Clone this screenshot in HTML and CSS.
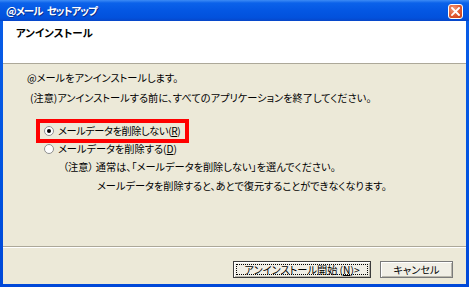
FILE: index.html
```html
<!DOCTYPE html>
<html lang="ja">
<head>
<meta charset="utf-8">
<title>@メール セットアップ</title>
<link rel="stylesheet" href="styles.css">
</head>
<body>
<div class="window">
  <div class="titlebar">
    <span class="title">@メール&nbsp;セットアップ</span>
    <span class="close">
      <svg width="9" height="9" viewBox="0 0 9 9"><path d="M1 1 L8 8 M8 1 L1 8" stroke="#fff" stroke-width="1.8" stroke-linecap="square"/></svg>
    </span>
  </div>
  <div class="body">
    <div class="header">
      <span class="header-title">アンインストール</span>
    </div>
    <div class="content">
      <p class="line l1">@メールをアンインストールします。</p>
      <p class="line l2">(注意)アンインストールする前に、すべてのアプリケーションを終了してください。</p>
      <div class="highlight">
        <span class="radio checked"></span>
        <span class="label">メールデータを削除しない(<u>R</u>)</span>
      </div>
      <div class="option">
        <span class="radio"></span>
        <span class="label">メールデータを削除する(<u>D</u>)</span>
      </div>
      <p class="line l5">（注意） 通常は、「メールデータを削除しない」を選んでください。</p>
      <p class="line l6">メールデータを削除すると、あとで復元することができなくなります。</p>
    </div>
    <div class="footer">
      <button class="btn default"><span class="focus">アンインストール開始 (<u>N</u>)&gt;</span></button>
      <button class="btn cancel">キャンセル</button>
    </div>
  </div>
</div>
</body>
</html>
```
FILE: styles.css
```css
* { box-sizing: border-box; }
html, body { margin: 0; padding: 0; }
body {
  width: 469px;
  height: 287px;
  overflow: hidden;
  font-family: "Noto Sans CJK JP", "Noto Sans", sans-serif;
  font-size: 10.2px;
  font-feature-settings: "palt";
  color: #000;
}
.window {
  width: 469px;
  height: 287px;
  display: flex;
  flex-direction: column;
  background: linear-gradient(to bottom, #0A5EE8, #0053E0 60%, #0048D8);
}
.titlebar {
  height: 21px;
  flex: none;
  display: flex;
  align-items: center;
  justify-content: space-between;
  padding: 0 6px 0 6px;
  background: linear-gradient(to bottom, #3D8BF5 0, #0B62EA 3px, #0457E3 50%, #0251DC 85%, #0746C8 100%);
}
.title {
  color: #fff;
  font-weight: bold;
  font-size: 10.5px;
  letter-spacing: -1px;
  word-spacing: 3px;
  line-height: 14px;
  text-shadow: 1px 1px 0 #0A2E8C;
  margin-top: 1px;
}
.close {
  width: 15px;
  height: 15px;
  margin-top: 2px;
  border: 1px solid #fff;
  border-radius: 3px;
  background: radial-gradient(circle at 35% 30%, #F29A7A, #E0582E 55%, #C43A16);
  display: flex;
  align-items: center;
  justify-content: center;
}
.body {
  flex: 1;
  margin: 0 3px 3px 3px;
  background: #ECE9D8;
  display: flex;
  flex-direction: column;
}
.header {
  height: 43px;
  flex: none;
  background: #fff;
  border-bottom: 1px solid #ACA899;
  padding: 4px 0 0 13px;
}
.header-title {
  font-weight: bold;
  font-size: 10.5px;
  line-height: 14px;
}
.content {
  flex: 1;
  display: flex;
  flex-direction: column;
  align-items: flex-start;
}
.line {
  margin: 0;
  line-height: 14px;
  white-space: nowrap;
}
.l1 { margin: 7px 0 0 24px; }
.l2 { margin: 6px 0 0 27px; }
.highlight {
  margin: 14px 0 0 33px;
  height: 24px;
  border: 4px solid #FF0000;
  display: flex;
  align-items: center;
  padding: 0 5px 0 4px;
}
.highlight .label { letter-spacing: -0.4px; }
.option {
  margin: 0 0 0 41px;
  height: 12px;
  display: flex;
  align-items: center;
}
.label {
  line-height: 14px;
  white-space: nowrap;
  margin-left: 4px;
}
.radio {
  width: 10px;
  height: 10px;
  border-radius: 50%;
  border: 1px solid #8E8F8F;
  background: #fff;
  flex: none;
  position: relative;
}
.radio.checked::after {
  content: "";
  position: absolute;
  left: 2px;
  top: 2px;
  width: 4px;
  height: 4px;
  border-radius: 50%;
  background: #000;
}
.l5 { margin: 5px 0 0 60px; }
.l6 { margin: 5px 0 0 94px; }
.footer {
  height: 38px;
  flex: none;
  border-top: 1px solid #ACA899;
  box-shadow: inset 0 1px 0 #fff;
  display: flex;
  justify-content: flex-end;
  align-items: flex-start;
  gap: 9px;
  padding: 14px 13px 0 0;
}
.btn {
  height: 17px;
  margin: 0;
  padding: 0;
  font-family: inherit;
  font-size: 10.2px;
  font-feature-settings: "palt";
  line-height: 13px;
  color: #000;
  background: #F1EFE6;
  border: 1px solid #7A7A7A;
  box-shadow: inset 1px 1px 0 #fff, inset -1px -1px 0 #B9B7AC;
  display: flex;
  align-items: center;
  justify-content: center;
}
.btn.default {
  width: 138px;
  border-color: #3C3C3C;
  padding: 2px;
}
.focus {
  flex: 1;
  align-self: stretch;
  border: 1px dotted #000;
  display: flex;
  align-items: center;
  justify-content: center;
}
.btn.cancel { width: 73px; }
```
